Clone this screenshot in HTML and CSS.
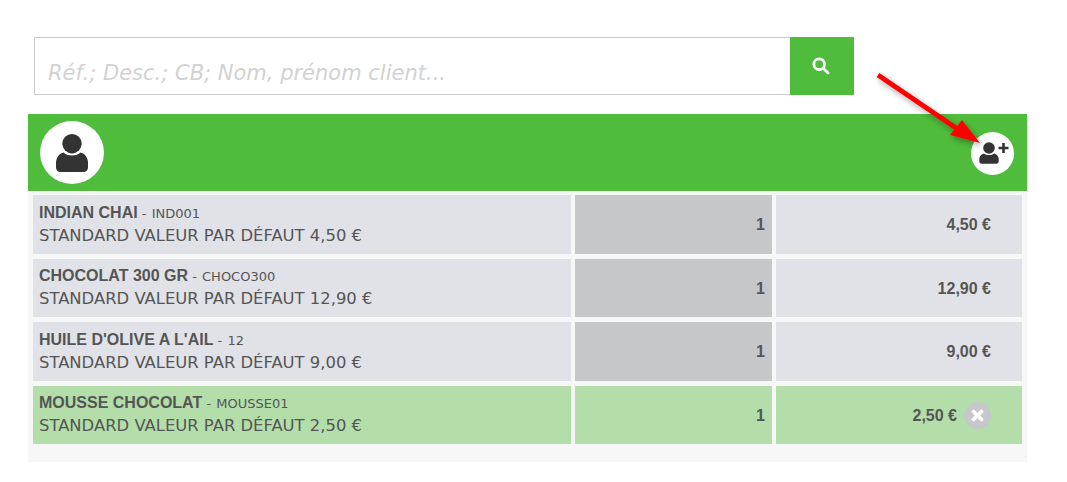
FILE: index.html
```html
<!DOCTYPE html>
<html lang="fr">
<head>
    <meta charset="UTF-8">
    <meta name="viewport" content="width=device-width, initial-scale=1.0">
    <title>Caisse</title>
    <link rel="stylesheet" href="styles.css">
</head>
<body>
<div class="page">
    <form class="search">
        <input class="search-input" type="text" placeholder="Réf.; Desc.; CB; Nom, prénom client...">
        <button class="search-btn" type="button" aria-label="Rechercher">
            <svg width="18" height="18" viewBox="0 0 18 18">
                <circle cx="7.200" cy="7.200" r="5.300" fill="none" stroke="#fff" stroke-width="2.800"/>
                <path d="M11.500 11.500 16 16" stroke="#fff" stroke-width="2.800" stroke-linecap="round"/>
            </svg>
        </button>
    </form>

    <div class="customer-bar">
        <div class="avatar">
            <svg width="32" height="38" viewBox="0 0 32 38">
                <circle cx="16" cy="9.700" r="9.700" fill="#333"/>
                <path d="M7.500 18.500c2 2 5 3 8.500 3s6.500-1 8.500-3c4.500 1 7 5 7.500 9.500v5.500c0 2.700-1.800 4.500-4.500 4.500h-23C1.800 38 0 36.200 0 33.500V28c.5-4.500 3-8.500 7.500-9.500z" fill="#333"/>
            </svg>
        </div>
        <button class="add-customer" type="button" aria-label="Ajouter un client">
            <svg width="30" height="22" viewBox="0 0 30 22">
                <circle cx="10" cy="6" r="5.800" fill="#333"/>
                <path d="M5 11.500c1.300 1.100 3.100 1.600 5 1.600s3.700-.5 5-1.600c2.500.6 4.400 2.500 4.700 5v2.500c0 1.700-1 2.700-2.500 2.700h-14.400C1.300 21.700.3 20.700.3 19v-2.500c.3-2.500 2.200-4.400 4.700-5z" fill="#333"/>
                <path d="M24.500 1v10M19.500 6h10" stroke="#333" stroke-width="2.600" fill="none"/>
            </svg>
        </button>
    </div>

    <div class="lines">
        <div class="line">
            <div class="cell cell-desc">
                <div class="line-title"><b>INDIAN CHAI</b> - <small>IND001</small></div>
                <div class="line-variant">STANDARD VALEUR PAR DÉFAUT 4,50 €</div>
            </div>
            <div class="cell cell-qty">1</div>
            <div class="cell cell-price">4,50 €</div>
        </div>
        <div class="line">
            <div class="cell cell-desc">
                <div class="line-title"><b>CHOCOLAT 300 GR</b> - <small>CHOCO300</small></div>
                <div class="line-variant">STANDARD VALEUR PAR DÉFAUT 12,90 €</div>
            </div>
            <div class="cell cell-qty">1</div>
            <div class="cell cell-price">12,90 €</div>
        </div>
        <div class="line">
            <div class="cell cell-desc">
                <div class="line-title"><b>HUILE D'OLIVE A L'AIL</b> - <small>12</small></div>
                <div class="line-variant">STANDARD VALEUR PAR DÉFAUT 9,00 €</div>
            </div>
            <div class="cell cell-qty">1</div>
            <div class="cell cell-price">9,00 €</div>
        </div>
        <div class="line line-active">
            <div class="cell cell-desc">
                <div class="line-title"><b>MOUSSE CHOCOLAT</b> - <small>MOUSSE01</small></div>
                <div class="line-variant">STANDARD VALEUR PAR DÉFAUT 2,50 €</div>
            </div>
            <div class="cell cell-qty">1</div>
            <div class="cell cell-price">
                2,50 €
                <span class="remove">
                    <svg width="13" height="13" viewBox="0 0 13 13">
                        <path d="M2.500 2.500l8 8M10.500 2.500l-8 8" stroke="#fff" stroke-width="3.800" stroke-linecap="round"/>
                    </svg>
                </span>
            </div>
        </div>
    </div>

    <!-- annotation arrow on top of the screenshot -->
    <svg class="arrow" width="130" height="100" viewBox="0 0 130 100">
        <defs>
            <filter id="arrowShadow" x="-20%" y="-20%" width="150%" height="150%">
                <feDropShadow dx="2" dy="3" stdDeviation="3" flood-color="#000" flood-opacity="0.35"/>
            </filter>
        </defs>
        <g filter="url(#arrowShadow)" fill="#f00">
            <path d="M8 13 86 66" stroke="#f00" stroke-width="5" fill="none"/>
            <path d="M92 58 110 81 80 73z"/>
        </g>
    </svg>
</div>
</body>
</html>
```

FILE: styles.css
```css
* {
    box-sizing: border-box;
}

body {
    margin: 0;
    background-color: #fff;
    font-family: "DejaVu Sans", sans-serif;
    color: #555;
}

.page {
    position: relative;
    width: 999px;
    margin-left: 28px;
    padding-top: 37px;
}

/* Search */
.search {
    display: flex;
    width: 820px;
    height: 58px;
    margin-left: 6px;
}

.search-input {
    flex: 1;
    min-width: 0;
    height: 58px;
    padding: 13px 13px 0;
    border: 1px solid #ccc;
    border-right: 0;
    outline: none;
    font-family: "DejaVu Sans", sans-serif;
    font-size: 21px;
    font-style: italic;
}

.search-input::placeholder {
    color: #d2d2d2;
    opacity: 1;
}

.search-btn {
    display: flex;
    align-items: center;
    justify-content: center;
    width: 64px;
    padding: 0 3px 1px 0;
    border: 0;
    background-color: #4fbc3c;
}

/* Customer bar */
.customer-bar {
    display: flex;
    align-items: center;
    justify-content: space-between;
    height: 76.5px;
    margin-top: 19px;
    padding: 0 13px 0 12px;
    background-color: #4fbc3c;
}

.avatar {
    display: flex;
    align-items: center;
    justify-content: center;
    width: 64px;
    height: 63px;
    margin-top: 1px;
    border-radius: 50%;
    background-color: #fff;
}

.add-customer {
    display: flex;
    align-items: center;
    justify-content: center;
    width: 43px;
    height: 43px;
    margin-top: 2px;
    padding: 0 0 0 2px;
    border: 0;
    border-radius: 50%;
    background-color: #fff;
}

/* Order lines */
.lines {
    display: flex;
    flex-direction: column;
    gap: 5px;
    padding: 4.5px 5px 18px;
    background-color: #f7f7f7;
}

.line {
    display: grid;
    grid-template-columns: 538px 197px 246px;
    gap: 4px;
    height: 58.5px;
}

.cell {
    display: flex;
    align-items: center;
    justify-content: flex-end;
    background-color: #e1e2e7;
}

.cell-desc {
    flex-direction: column;
    align-items: flex-start;
    justify-content: center;
    padding-left: 6px;
}

.cell-qty {
    padding: 2px 7px 0 0;
    background-color: #c6c7cb;
    font-family: "Liberation Sans", sans-serif;
    font-size: 16px;
    font-weight: bold;
}

.cell-price {
    padding: 1.5px 31px 0 0;
    font-family: "Liberation Sans", sans-serif;
    font-size: 16px;
    font-weight: bold;
}

.line-title {
    font-size: 13px;
    line-height: 22px;
}

.line-title b {
    font-family: "Liberation Sans", sans-serif;
    font-size: 16px;
}

.line-title small {
    margin-left: 1px;
    font-size: 13px;
}

.line-variant {
    font-size: 16.4px;
    line-height: 22px;
}

.line-active .cell {
    background-color: #b3dea9;
}

.remove {
    display: flex;
    align-items: center;
    justify-content: center;
    width: 27px;
    height: 27px;
    margin-left: 7px;
    border-radius: 50%;
    background-color: #c6c7cb;
}

.arrow {
    position: absolute;
    top: 62px;
    left: 842px;
}
```
